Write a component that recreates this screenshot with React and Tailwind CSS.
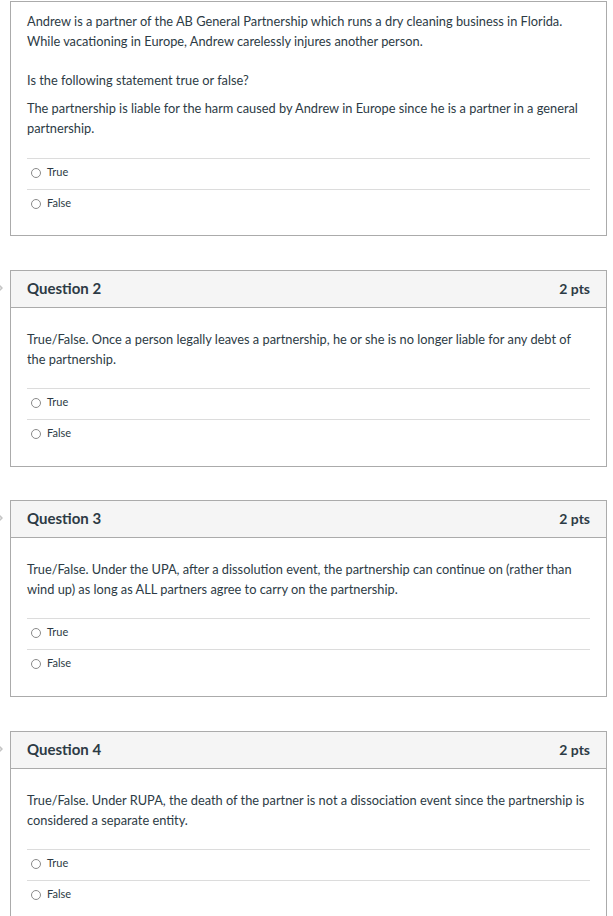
import React from "react";

const textColor = "text-[#2d3b45]";

function Chevron() {
  return (
    <div className="w-[10px] shrink-0 relative">
      <svg
        className="absolute left-[-6px] top-[12px]"
        width="10"
        height="12"
        viewBox="0 0 10 12"
        fill="none"
      >
        <path d="M3 1.5 L8 6 L3 10.5" stroke="#c4c4c4" strokeWidth="1.6" strokeLinecap="round" strokeLinejoin="round" />
      </svg>
    </div>
  );
}

function Answers() {
  return (
    <div>
      {["True", "False"].map((a) => (
        <div key={a} className="border-t border-[#dcdcdc] h-[31px] flex items-center pl-[4px] pb-[3px]">
          <span className="w-[10px] h-[10px] rounded-full border border-[#8a8a8a] bg-white shrink-0" />
          <span className={`ml-[6px] text-[11px] ${textColor}`}>{a}</span>
        </div>
      ))}
    </div>
  );
}

function Question({ n, text }) {
  return (
    <div className="flex">
      <Chevron />
      <div className="w-[597px] border border-[#ababab] bg-white">
        <div className="h-[37px] bg-[#f5f5f5] border-b border-[#ababab] flex items-center justify-between px-4 pb-[2px]">
          <span className={`text-[15px] font-bold ${textColor}`}>Question {n}</span>
          <span className={`text-[14px] font-bold ${textColor}`}>2 pts</span>
        </div>
        <div className="px-4 pt-[21px] pb-4">
          <p className={`text-[12.8px] leading-[20px] ${textColor}`}>{text}</p>
          <div className="mt-[19px]">
            <Answers />
          </div>
        </div>
      </div>
    </div>
  );
}

export default function App() {
  return (
    <div className="w-[613px] min-h-[916px] bg-white pt-[1px] overflow-hidden" style={{ fontFamily: "Lato, 'Open Sans', sans-serif" }}>
      <div className="flex">
        <div className="w-[10px] shrink-0" />
        <div className="w-[597px] border border-[#ababab] bg-white">
          <div className="px-4 pt-[9px] pb-[15px]">
            <p className={`text-[12.8px] leading-[20px] ${textColor}`}>
              Andrew is a partner of the AB General Partnership which runs a dry cleaning business in Florida. While vacationing in Europe, Andrew carelessly injures another person.
            </p>
            <p className={`mt-[19px] text-[12.8px] leading-[20px] ${textColor}`}>Is the following statement true or false?</p>
            <p className={`mt-[8px] text-[12.8px] leading-[20px] ${textColor}`}>
              The partnership is liable for the harm caused by Andrew in Europe since he is a partner in a general partnership.
            </p>
            <div className="mt-[20px]">
              <Answers />
            </div>
          </div>
        </div>
      </div>
      <div className="mt-[34px]">
        <Question n={2} text="True/False. Once a person legally leaves a partnership, he or she is no longer liable for any debt of the partnership." />
      </div>
      <div className="mt-[33px]">
        <Question n={3} text="True/False. Under the UPA, after a dissolution event, the partnership can continue on (rather than wind up) as long as ALL partners agree to carry on the partnership." />
      </div>
      <div className="mt-[34px]">
        <Question n={4} text="True/False. Under RUPA, the death of the partner is not a dissociation event since the partnership is considered a separate entity." />
      </div>
    </div>
  );
}
